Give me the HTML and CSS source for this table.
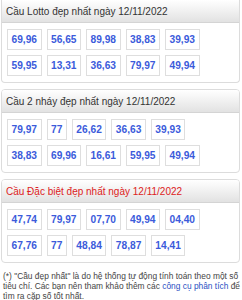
FILE: index.html
```html
<!DOCTYPE html>
<html lang="vi">
<head>
<meta charset="utf-8">
<link rel="stylesheet" href="styles.css">
</head>
<body>
<div class="page">
  <section class="card">
    <div class="card-head">Cầu Lotto đẹp nhất ngày 12/11/2022</div>
    <div class="card-body">
      <div class="row"><span class="num">69,96</span><span class="num">56,65</span><span class="num">89,98</span><span class="num">38,83</span><span class="num">39,93</span></div>
      <div class="row"><span class="num">59,95</span><span class="num">13,31</span><span class="num">36,63</span><span class="num">79,97</span><span class="num">49,94</span></div>
    </div>
  </section>
  <section class="card">
    <div class="card-head">Cầu 2 nháy đẹp nhất ngày 12/11/2022</div>
    <div class="card-body">
      <div class="row"><span class="num">79,97</span><span class="num">77</span><span class="num">26,62</span><span class="num">36,63</span><span class="num">39,93</span></div>
      <div class="row"><span class="num">38,83</span><span class="num">69,96</span><span class="num">16,61</span><span class="num">59,95</span><span class="num">49,94</span></div>
    </div>
  </section>
  <section class="card">
    <div class="card-head red">Cầu Đặc biệt đẹp nhất ngày 12/11/2022</div>
    <div class="card-body">
      <div class="row"><span class="num">47,74</span><span class="num">79,97</span><span class="num">07,70</span><span class="num">49,94</span><span class="num">04,40</span></div>
      <div class="row"><span class="num">67,76</span><span class="num">77</span><span class="num">48,84</span><span class="num">78,87</span><span class="num">14,41</span></div>
    </div>
  </section>
  <p class="note">(*) "Cầu đẹp nhất" là do hệ thống tự động tính toán theo một số tiêu chí. Các bạn nên tham khảo thêm các <a href="#">công cụ phân tích</a> để tìm ra cặp số tốt nhất.</p>
</div>
</body>
</html>
```

FILE: styles.css
```css
html, body {
  margin: 0;
  padding: 0;
  background: #fff;
}
.page {
  padding: 0 2px 0 1px;
  font-family: "Liberation Sans", Arial, sans-serif;
  display: flex;
  flex-direction: column;
  gap: 6px;
}
.card {
  border: 1px solid #dcdcdc;
  border-radius: 4px;
  overflow: hidden;
}
.card:first-child {
  border-top: none;
  border-radius: 0 0 4px 4px;
}
.card-head {
  height: 22px;
  line-height: 23px;
  padding-left: 4px;
  font-size: 10px;
  color: #333;
  background: linear-gradient(#ffffff, #e2e2e2);
  border-bottom: 1px solid #d4d4d4;
}
.card-head.red {
  color: #d22;
}
.card-body {
  display: flex;
  flex-direction: column;
  gap: 5px;
  padding: 6px 5px 6px 5px;
}
.row {
  display: flex;
  gap: 5px;
}
.num {
  display: block;
  border: 1px solid #dedede;
  padding: 0 3.5px;
  height: 19px;
  line-height: 20px;
  font-size: 10.2px;
  font-weight: bold;
  color: #3b5bdb;
}
.note {
  margin: 2px 0 0 2px;
  font-size: 8.4px;
  line-height: 10px;
  color: #444;
}
.note a {
  color: #2a4fc2;
  text-decoration: none;
}
```
